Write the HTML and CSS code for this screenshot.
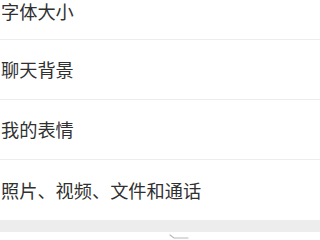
FILE: index.html
```
<!DOCTYPE html>
<html lang="zh">
<head>
<meta charset="utf-8">
<link rel="stylesheet" href="styles.css">
</head>
<body>
<ul class="list">
  <li class="row first">字体大小</li>
  <li class="row">聊天背景</li>
  <li class="row">我的表情</li>
  <li class="row">照片、视频、文件和通话</li>
</ul>
<div class="gap"></div>
<div class="next">
  <svg class="icon" width="24" height="8" viewBox="0 0 24 8"><path d="M2 1 L6 4 L20 4" stroke="#b8b8b8" stroke-width="1.2" fill="none" stroke-linecap="round"/></svg>
</div>
</body>
</html>
```
FILE: styles.css
```
html, body {
  margin: 0;
  padding: 0;
  background: #ffffff;
  width: 320px;
  height: 240px;
  overflow: hidden;
}
body {
  font-family: "Noto Sans CJK SC", "Noto Sans", sans-serif;
  color: #303030;
}
.list {
  list-style: none;
  margin: 0;
  padding: 0;
}
.row {
  height: 59px;
  border-bottom: 1px solid #ececec;
  display: flex;
  align-items: center;
  padding-left: 1px;
  font-size: 18.2px;
  line-height: 1;
}
.row.first {
  height: 37px;
  padding-top: 2px;
  align-items: flex-start;
}
.row:last-child {
  border-bottom: none;
  height: 60px;
}
.gap {
  height: 12px;
  background: #ededed;
}
.next {
  height: 8px;
  background: #ffffff;
  padding-left: 168px;
}
.icon {
  display: block;
  margin-top: 2px;
}
```
